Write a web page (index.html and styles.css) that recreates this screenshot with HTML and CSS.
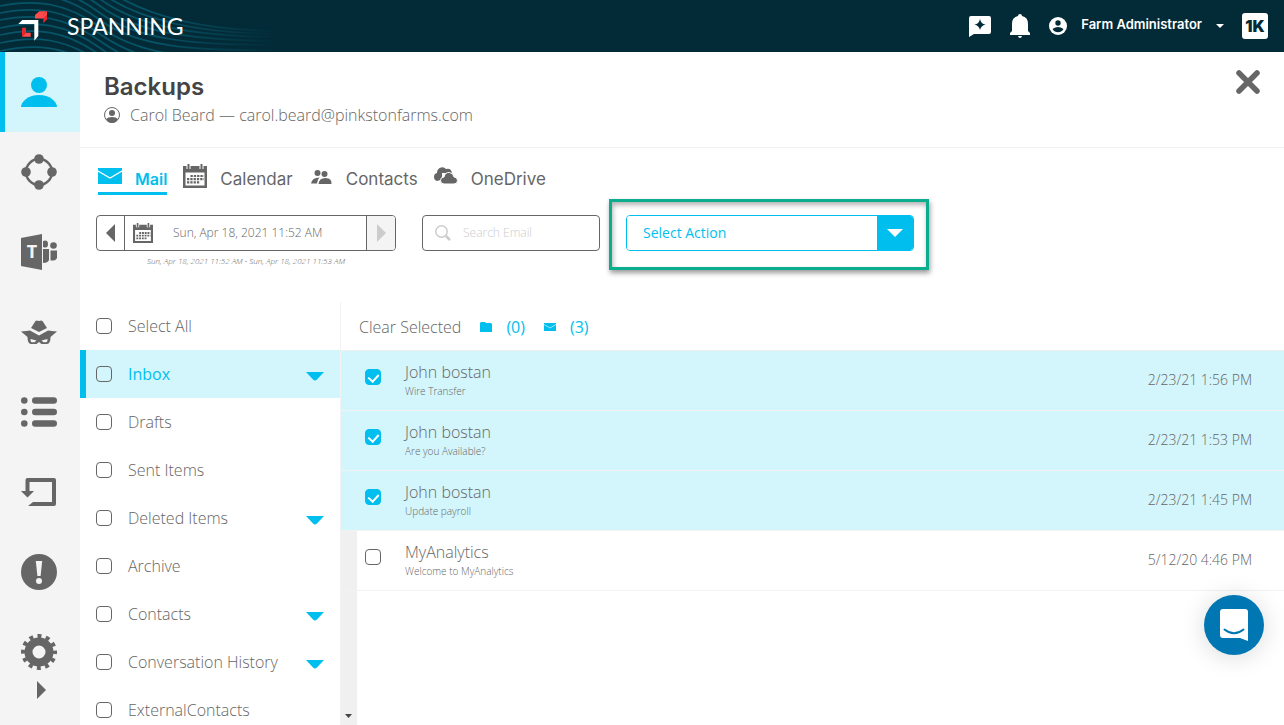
FILE: index.html
```html
<!DOCTYPE html>
<html lang="en">

<head>
    <meta charset="utf-8">
    <meta content="width=device-width, initial-scale=1" name="viewport">
    <title>Spanning Backups</title>
    <link rel="stylesheet" href="styles.css">
</head>

<body>
    <!-- shared icons -->
    <svg class="sprite" aria-hidden="true">
        <symbol id="icon-mail" viewBox="0 0 24 16">
            <path d="M0 0h24v16H0z" />
            <path d="M0 3l12 7 12-7" fill="none" stroke="#fff" stroke-width="1.2" />
        </symbol>
        <symbol id="icon-calendar" viewBox="0 0 24 24">
            <path d="M0 2h24v22H0zM2.500 8.500v13h19v-13z" fill-rule="evenodd" />
            <path d="M5.500 0v5M18.500 0v5" stroke="#fff" stroke-width="4" />
            <path d="M5.500 0v5M18.500 0v5" stroke="currentColor" stroke-width="2" />
            <path d="M7.500 12H21M4 15.200H21M4 18.400H17" stroke="currentColor" stroke-width="2.200" stroke-dasharray="2.300 1" />
        </symbol>
        <symbol id="icon-down" viewBox="0 0 18 9">
            <path d="M0 0h18l-7 7.500q-2 2-4 0z" />
        </symbol>
    </svg>

    <header id="topBar">
        <svg class="waves" viewBox="0 0 290 52" aria-hidden="true">
            <defs>
                <linearGradient id="waveFade" gradientUnits="userSpaceOnUse" x1="0" y1="0" x2="275" y2="0">
                    <stop offset="0" stop-color="#075468" />
                    <stop offset="0.550" stop-color="#075468" />
                    <stop offset="1" stop-color="#022b37" />
                </linearGradient>
            </defs>
            <g fill="none" stroke="url(#waveFade)" stroke-width="1.700">
                <path d="M0-37C35-45 65-41 100-15S190 30 275 31" />
                <path d="M0-30C35-38 65-34 100-8S190 33 275 34" />
                <path d="M0-23C35-31 65-27 100-1S190 36 275 37" />
                <path d="M0-16C35-24 65-20 100 6S190 40 275 41" />
                <path d="M0-9C35-17 65-13 100 13S190 45 275 45" />
                <path d="M0-2C35-10 65-6 100 20S190 51 275 50" />
                <path d="M0 6C35-1 65 2 100 27S180 60 275 60" />
                <path d="M0 13C35 6 65 9 100 34S180 70 275 70" />
                <path d="M0 20C35 13 65 16 100 41S180 80 275 80" />
                <path d="M0 28C35 20 65 23 100 48S180 90 275 90" />
                <path d="M0 35C35 27 65 30 100 55" />
                <path d="M0 43C35 35 65 38 100 62" />
                <path d="M0 51C35 43 65 46 100 69" />
            </g>
        </svg>
        <a class="brand" href="#">
            <svg width="30" height="30" viewBox="0 0 30 30" aria-hidden="true">
                <path d="M17 4L21.300.3H29L25.300 4z" fill="#ff4b4b" />
                <path d="M25.300 4L29 .3v8l-3.700 4z" fill="#e8262b" />
                <path d="M17 4h8.300L29 .3v3.500L25 7.500H17z" fill="#ff4b4b" />
                <path d="M.3 13l4-4h16v16l-4 4.700V13z" fill="#fff" />
                <path d="M4 16.700h4v5l-4 4z" fill="#e8262b" />
                <path d="M8 21.700h4.700v4H4z" fill="#ff4b4b" />
            </svg>
            <span>SPANNING</span>
        </a>
        <nav class="account">
            <button type="button" aria-label="What's new">
                <svg width="22" height="22" viewBox="0 0 22 22">
                    <path d="M2 1h18q2 0 2 2v14q0 2-2 2H5l-5 3V3q0-2 2-2z" fill="#fff" />
                    <path d="M11 4q1 5 5.500 5.500Q12 10.500 11 15 10 10.500 5.500 9.500 10 9 11 4z" fill="#022b37" />
                </svg>
            </button>
            <button type="button" aria-label="Notifications">
                <svg width="22" height="24" viewBox="0 0 22 24">
                    <path d="M9 2a2 2 0 0 1 4 0q6 1 6 8v7l2 2v2H1v-2l2-2v-7q0-7 6-8zM9 22h4q-.5 2-2 2t-2-2z" fill="#fff" />
                </svg>
            </button>
            <button type="button" class="admin">
                <svg width="18" height="18" viewBox="0 0 18 18" aria-hidden="true">
                    <circle cx="9" cy="9" r="9" fill="#fff" />
                    <circle cx="9" cy="6" r="2.700" fill="#022b37" />
                    <path d="M3.500 12q5.500-4 11 0-2 3.300-5.500 3.300T3.500 12z" fill="#022b37" />
                </svg>
                <span>Farm Administrator</span>
                <svg width="8" height="4" viewBox="0 0 8 4" aria-hidden="true">
                    <path d="M0 0h8L4 4z" fill="#fff" />
                </svg>
            </button>
            <a class="oneLogo" href="#" aria-label="Kaseya One">1K</a>
        </nav>
    </header>

    <div id="page">
        <nav id="sideBar">
            <a class="active" href="#" aria-label="Users">
                <svg width="36" height="36" viewBox="0 0 36 36">
                    <circle cx="18" cy="11" r="8" />
                    <path d="M0 33q0-4 5-8 5-4 13-4t13 4q5 4 5 8z" />
                </svg>
            </a>
            <a href="#" aria-label="Sites">
                <svg width="36" height="36" viewBox="0 0 36 36">
                    <circle cx="18" cy="18" r="13" fill="none" stroke="currentColor" stroke-width="2.500" />
                    <circle cx="18" cy="5" r="4.800" />
                    <circle cx="18" cy="31" r="4.800" />
                    <circle cx="5" cy="18" r="4.800" />
                    <circle cx="31" cy="18" r="4.800" />
                </svg>
            </a>
            <a href="#" aria-label="Teams">
                <svg width="36" height="36" viewBox="0 0 36 36">
                    <path d="M0 4l21-4v36L0 32z" />
                    <text class="teamsLetter" x="11" y="24" text-anchor="middle">T</text>
                    <path d="M22 7q5-2 5 3t-5 3zM22 15h6v11q-1 3-6 3z" />
                    <circle cx="32.500" cy="11.500" r="3.300" />
                    <path d="M29.500 16.500H36V24q-1 3-6.500 2.500z" />
                </svg>
            </a>
            <a href="#" aria-label="Threats">
                <svg width="36" height="36" viewBox="0 0 36 36">
                    <path d="M10 14l4.500-7q1-1.200 3.500 0 2.500-1.200 3.500 0l4.500 7-8 4z" />
                    <path d="M0 17.500q6-.5 9-1l9 5 9-5q3 .5 9 1l-6.500 5.500q0 7-3.500 7h-5.500L18 28l-2.500 2H10q-3.500 0-3.500-7z" />
                    <path d="M9.500 25l6 1.500-2 1.800H11q-1.500 0-1.500-3.300zM26.500 25l-6 1.500 2 1.800H25q1.500 0 1.500-3.300z" fill="#f4f4f4" />
                </svg>
            </a>
            <a href="#" aria-label="Activity">
                <svg width="36" height="36" viewBox="0 0 36 36">
                    <circle cx="3.300" cy="6.500" r="3.300" />
                    <circle cx="3.300" cy="18" r="3.300" />
                    <circle cx="3.300" cy="29.500" r="3.300" />
                    <path d="M14.300 6.500h18.400M14.300 18h18.400M14.300 29.500h18.400" stroke="currentColor" stroke-width="6.600" stroke-linecap="round" />
                </svg>
            </a>
            <a href="#" aria-label="Restores">
                <svg width="36" height="36" viewBox="0 0 36 36">
                    <path d="M4.500 6q0-2 2-2H33q2 0 2 2v24q0 2-2 2H7l5-4h19V8H8.500v9H13l-6.500 6.500L0 17h4.500z" />
                </svg>
            </a>
            <a href="#" aria-label="Alerts">
                <svg width="36" height="36" viewBox="0 0 36 36">
                    <circle cx="18" cy="18" r="18" />
                    <path d="M14.800 7h6.400l-1.600 15h-3.200z" fill="#f4f4f4" />
                    <circle cx="18" cy="27" r="3" fill="#f4f4f4" />
                </svg>
            </a>
            <a href="#" aria-label="Settings">
                <svg width="36" height="36" viewBox="0 0 36 36">
                    <circle cx="18" cy="18" r="10.500" fill="none" stroke="currentColor" stroke-width="8" />
                    <circle cx="18" cy="18" r="16" fill="none" stroke="currentColor" stroke-width="4" stroke-dasharray="4 4.378" stroke-dashoffset="2" />
                </svg>
            </a>
            <button type="button" class="expand" aria-label="Expand menu">
                <svg width="9" height="18" viewBox="0 0 9 18">
                    <path d="M0 0l9 9-9 9z" />
                </svg>
            </button>
        </nav>

        <main>
            <section class="pageHead">
                <div>
                    <h1>Backups</h1>
                    <p class="owner">
                        <svg width="16" height="16" viewBox="0 0 16 16" aria-hidden="true">
                            <circle cx="8" cy="8" r="7.500" fill="none" stroke="currentColor" />
                            <circle cx="8" cy="6" r="3" />
                            <path d="M2 12q2-2 6-2t6 2q-2 4-6 4t-6-4z" />
                        </svg>
                        Carol Beard — carol.beard@pinkstonfarms.com
                    </p>
                </div>
                <button type="button" class="close" aria-label="Close">
                    <svg width="24" height="24" viewBox="0 0 24 24">
                        <path d="M3 3l18 18M21 3L3 21" stroke="currentColor" stroke-width="5.500" stroke-linecap="round" />
                    </svg>
                </button>
            </section>

            <nav class="tabs">
                <a class="active" href="#"><svg width="24" height="16"><use href="#icon-mail" /></svg>Mail</a>
                <a href="#"><svg width="24" height="24"><use href="#icon-calendar" /></svg>Calendar</a>
                <a href="#">
                    <svg width="24" height="16" viewBox="0 -1 24 16">
                        <circle cx="8.500" cy="4" r="3" />
                        <circle cx="15.500" cy="5" r="3" />
                        <path d="M2 14.500q1-6 8.500-6-2 2-2.500 6zM9.500 15q.5-6 7-6t6 6z" />
                    </svg>Contacts</a>
                <a href="#">
                    <svg width="24" height="18" viewBox="0 0 24 18">
                        <path d="M3 14q-3-1-3-4 0-3.500 3-4 0-4.500 4-5.500 3-.8 5 1.500 5-1.500 6 4H8v6.500z" />
                        <path d="M10 17q-3.500 0-3.500-3.500t3.500-3.500q1-5 5.500-4.500 4 .5 4.500 4.500 3.500 0 3.500 3.500T20 17z" stroke="#fff" />
                    </svg>OneDrive</a>
            </nav>

            <section class="toolBar">
                <div class="dateGroup">
                    <div class="datePicker">
                        <button type="button" class="prev" aria-label="Previous backup">
                            <svg width="9" height="18" viewBox="0 0 9 18"><path d="M9 0v18L0 9z" /></svg>
                        </button>
                        <button type="button" class="date">
                            <svg width="20" height="20" aria-hidden="true"><use href="#icon-calendar" /></svg>
                            <span>Sun, Apr 18, 2021 11:52 AM</span>
                        </button>
                        <button type="button" class="next" aria-label="Next backup" disabled>
                            <svg width="9" height="18" viewBox="0 0 9 18"><path d="M0 0l9 9-9 9z" /></svg>
                        </button>
                    </div>
                    <p class="range">Sun, Apr 18, 2021 11:52 AM - Sun, Apr 18, 2021 11:53 AM</p>
                </div>

                <label class="search">
                    <svg width="16" height="16" viewBox="0 0 16 16" aria-hidden="true">
                        <circle cx="6.500" cy="6.500" r="5.700" fill="none" stroke="currentColor" stroke-width="1.500" />
                        <path d="M11 11l4 4" stroke="currentColor" stroke-width="2.500" />
                    </svg>
                    <input type="text" placeholder="Search Email" aria-label="Search Email">
                </label>

                <div class="highlight">
                    <label class="action">
                        <select aria-label="Select Action">
                            <option>Select Action</option>
                        </select>
                        <span class="actionArrow">
                            <svg width="16" height="8" viewBox="0 0 16 8" aria-hidden="true"><path d="M0 0h16L8 8z" /></svg>
                        </span>
                    </label>
                </div>
            </section>

            <section class="content">
                <ul class="folders">
                    <li><label><input type="checkbox">Select All</label></li>
                    <li class="active"><label><input type="checkbox">Inbox</label>
                        <button type="button" aria-label="Expand Inbox"><svg width="18" height="9"><use href="#icon-down" /></svg></button></li>
                    <li><label><input type="checkbox">Drafts</label></li>
                    <li><label><input type="checkbox">Sent Items</label></li>
                    <li><label><input type="checkbox">Deleted Items</label>
                        <button type="button" aria-label="Expand Deleted Items"><svg width="18" height="9"><use href="#icon-down" /></svg></button></li>
                    <li><label><input type="checkbox">Archive</label></li>
                    <li><label><input type="checkbox">Contacts</label>
                        <button type="button" aria-label="Expand Contacts"><svg width="18" height="9"><use href="#icon-down" /></svg></button></li>
                    <li><label><input type="checkbox">Conversation History</label>
                        <button type="button" aria-label="Expand Conversation History"><svg width="18" height="9"><use href="#icon-down" /></svg></button></li>
                    <li><label><input type="checkbox">ExternalContacts</label></li>
                </ul>

                <div class="messages">
                    <div class="selection">
                        <button type="button">Clear Selected</button>
                        <span class="count">
                            <svg width="12" height="10" viewBox="0 0 12 10" aria-hidden="true"><path d="M1 0h4l1 1h5l1 1v8H0V1z" /></svg>
                            (0)
                        </span>
                        <span class="count">
                            <svg width="12" height="8" aria-hidden="true"><use href="#icon-mail" /></svg>
                            (3)
                        </span>
                    </div>
                    <div class="messageList">
                        <label class="message selected">
                            <input type="checkbox" checked>
                            <span class="subject"><b>John bostan</b><small>Wire Transfer</small></span>
                            <time>2/23/21 1:56 PM</time>
                        </label>
                        <label class="message selected">
                            <input type="checkbox" checked>
                            <span class="subject"><b>John bostan</b><small>Are you Available?</small></span>
                            <time>2/23/21 1:53 PM</time>
                        </label>
                        <label class="message selected">
                            <input type="checkbox" checked>
                            <span class="subject"><b>John bostan</b><small>Update payroll</small></span>
                            <time>2/23/21 1:45 PM</time>
                        </label>
                        <label class="message">
                            <input type="checkbox">
                            <span class="subject"><b>MyAnalytics</b><small>Welcome to MyAnalytics</small></span>
                            <time>5/12/20 4:46 PM</time>
                        </label>
                        <svg class="scrollDown" width="7" height="4" viewBox="0 0 7 4" aria-hidden="true"><path d="M0 0h7L3.500 4z" /></svg>
                    </div>
                </div>
            </section>
        </main>
    </div>

    <button type="button" id="chat" aria-label="Open chat">
        <svg width="28" height="32" viewBox="0 0 28 32">
            <path d="M3 0h22q3 0 3 3v29l-8-3H3q-3 0-3-3V3q0-3 3-3z" fill="#fff" />
            <path d="M4.500 20.500q9.500 7.500 19 0" fill="none" stroke="#0077b3" stroke-width="2" stroke-linecap="round" />
        </svg>
    </button>
</body>

</html>
```
FILE: styles.css
```css
* {
    box-sizing: border-box;
}

html,
body {
    height: 100%;
    margin: 0;
}

body {
    display: flex;
    flex-direction: column;
    overflow: hidden;
    background-color: white;
    color: #666;
    font-family: "Open Sans", sans-serif;
    font-size: 16px;
    font-weight: 300;
}

button,
input,
select {
    font: inherit;
    color: inherit;
}

button {
    padding: 0;
    border: none;
    background: none;
    cursor: pointer;
}

a {
    color: inherit;
    text-decoration: none;
}

svg {
    display: block;
    flex: none;
    fill: currentColor;
}

.sprite {
    position: absolute;
    width: 0;
    height: 0;
}

input[type="checkbox"] {
    appearance: none;
    flex: none;
    display: flex;
    justify-content: center;
    width: 16px;
    height: 16px;
    margin: 0;
    border: 1px solid #666;
    border-radius: 4px;
}

input[type="checkbox"]:checked {
    border-color: #00bfee;
    background-color: #00bfee;
}

/* the tick */
input[type="checkbox"]:checked::after {
    content: "";
    width: 5px;
    height: 8px;
    margin-top: 2px;
    border: solid white;
    border-width: 0 2px 2px 0;
    transform: rotate(42deg);
}

/* top bar */
#topBar {
    position: relative;
    display: flex;
    flex: none;
    justify-content: space-between;
    align-items: center;
    height: 52px;
    padding: 0 16px 0 18px;
    background-color: #022b37;
    color: white;
}

.waves {
    position: absolute;
    top: 0;
    left: 0;
    width: 290px;
    height: 52px;
}

.brand {
    position: relative;
    display: flex;
    align-items: center;
    gap: 19px;
    font-family: "Lato", sans-serif;
    font-size: 23px;
    font-weight: 400;
}

.account {
    display: flex;
    align-items: center;
    gap: 18px;
}

.admin {
    display: flex;
    align-items: center;
    gap: 14px;
    font-family: "Inter", sans-serif;
    font-size: 13px;
    font-weight: 600;
    line-height: 20px;
}

.admin span {
    padding-bottom: 4px;
}

.oneLogo {
    width: 26px;
    border-radius: 3px;
    background-color: white;
    color: #022b37;
    font-family: "Inter", sans-serif;
    font-size: 16px;
    font-weight: 900;
    line-height: 26px;
    text-align: center;
}

/* left menu */
#page {
    display: flex;
    flex: 1;
    min-height: 0;
}

#sideBar {
    display: flex;
    flex: none;
    flex-direction: column;
    width: 80px;
    background-color: #f4f4f4;
}

#sideBar a {
    display: flex;
    flex: none;
    align-items: center;
    justify-content: center;
    height: 80px;
    padding-right: 2px;
}

#sideBar a.active {
    padding-right: 7px;
    border-left: 5px solid #00bfee;
    background-color: #d3f5fc;
    color: #00bfee;
}

.teamsLetter {
    fill: #f4f4f4;
    font-family: "Open Sans", sans-serif;
    font-size: 18px;
    font-weight: 700;
}

.expand {
    align-self: center;
    margin-top: -11px;
    padding-left: 2px;
}

/* page title */
main {
    display: flex;
    flex: 1;
    flex-direction: column;
    min-width: 0;
}

.pageHead {
    display: flex;
    justify-content: space-between;
    align-items: flex-start;
    height: 96px;
    padding: 18px 24px 0;
    border-bottom: 1px solid #f0f0f0;
}

h1 {
    margin: 0;
    color: #444;
    font-family: "Inter", sans-serif;
    font-size: 24px;
    font-weight: 600;
    line-height: 34px;
}

.owner {
    display: flex;
    align-items: center;
    gap: 10px;
    margin: 0;
    line-height: 22px;
}

/* tabs */
.tabs {
    display: flex;
    align-items: flex-start;
    gap: 16px;
    padding: 17px 18px 0;
    font-family: "Inter", sans-serif;
    font-size: 17px;
    font-weight: 400;
}

.tabs a {
    display: flex;
    align-items: center;
    gap: 13px;
    height: 30px;
    border-bottom: 3px solid transparent;
}

.tabs svg {
    margin-bottom: 6px;
}

.tabs a.active {
    border-color: #00bfee;
    color: #00bfee;
    font-size: 16px;
    font-weight: 600;
}

/* date, search and action */
.toolBar {
    display: flex;
    align-items: flex-start;
    height: 107px;
    padding: 4px 16px 0;
}

.dateGroup {
    width: 300px;
    margin: 16px 26px 0 0;
}

.datePicker {
    display: flex;
    height: 36px;
    border: 1px solid #666;
    border-radius: 4px;
    overflow: hidden;
}

.datePicker button {
    display: flex;
    align-items: center;
}

.prev,
.next {
    justify-content: center;
    width: 28px;
}

.datePicker .prev {
    width: 27px;
}

.datePicker .date {
    flex: 1;
    gap: 20px;
    padding-left: 8px;
    border: solid #666;
    border-width: 0 1px;
    font-size: 12px;
}

.date span,
.search input,
.action select {
    padding-bottom: 2px;
}

.next {
    background-color: #f4f4f4;
    color: #ccc;
}

.range {
    margin: 4px 0 0;
    font-size: 8px;
    font-style: italic;
    line-height: 12px;
    text-align: center;
}

.search {
    display: flex;
    align-items: center;
    gap: 12px;
    width: 178px;
    height: 36px;
    margin-top: 16px;
    padding: 0 12px;
    border: 1px solid #666;
    border-radius: 4px;
    color: #ccc;
}

.search input {
    width: 100%;
    min-width: 0;
    padding: 0 0 2px;
    border: none;
    outline: none;
    font-size: 12px;
}

.search input::placeholder {
    color: #ccc;
}

.highlight {
    width: 320px;
    margin-left: 9px;
    padding: 13px 12px 16px 14px;
    border: 3px solid #0aae8e;
    box-shadow: 1px 3px 5px rgba(0, 0, 0, 0.4), inset 1px 3px 5px rgba(0, 0, 0, 0.3);
}

.action {
    display: flex;
    height: 36px;
    border: 1px solid #00bfee;
    border-radius: 4px;
    overflow: hidden;
    color: #00bfee;
}

.action select {
    appearance: none;
    flex: 1;
    padding: 0 16px 2px;
    border: none;
    background: white;
    font-size: 14px;
    font-weight: 500;
}

.actionArrow {
    display: flex;
    align-items: center;
    justify-content: center;
    width: 36px;
    background-color: #00bfee;
    color: white;
}

/* folders */
.content {
    display: flex;
    flex: 1;
    min-height: 0;
}

.folders {
    flex: none;
    width: 261px;
    margin: 0;
    padding: 0;
    border-right: 1px solid #f2f2f2;
    overflow: hidden;
    list-style: none;
}

.folders li {
    display: flex;
    align-items: center;
    justify-content: space-between;
    height: 48px;
    padding: 0 16px;
}

.folders label {
    display: flex;
    align-items: center;
    gap: 16px;
}

.folders button {
    padding-top: 4px;
}

.folders svg {
    color: #00bfee;
}

.folders li.active {
    padding-left: 10px;
    border-left: 6px solid #00bfee;
    background-color: #d3f5fc;
}

.folders li.active label {
    color: #00bfee;
    font-weight: 400;
}

/* messages */
.messages {
    display: flex;
    flex: 1;
    flex-direction: column;
    min-width: 0;
}

.selection {
    display: flex;
    align-items: center;
    gap: 19px;
    height: 48px;
    padding: 2px 18px 0;
}

.selection button {
    font-weight: 300;
}

.count {
    display: flex;
    align-items: center;
    gap: 14px;
    color: #00bfee;
    font-weight: 400;
}

/* grey strip on the left is the folder scroll track */
.messageList {
    display: flex;
    flex: 1;
    flex-direction: column;
    border-top: 1px solid #f0f0f0;
    background: linear-gradient(#f0f0f0, #f0f0f0) left / 16px 100% no-repeat;
}

.message {
    display: flex;
    align-items: center;
    height: 60px;
    padding: 0 32px 2px 24px;
    border-bottom: 1px solid #f2f2f2;
}

.message.selected {
    background-color: #d3f5fc;
}

.message input[type="checkbox"] {
    margin: 0 24px 6px 0;
}

.subject {
    display: flex;
    flex: 1;
    flex-direction: column;
}

.subject b {
    font-weight: 300;
    line-height: 22px;
}

.subject small {
    font-size: 10px;
    line-height: 16px;
}

.message time {
    font-size: 14px;
}

.scrollDown {
    margin: auto 0 7px 4px;
    color: #444;
}

#chat {
    position: fixed;
    right: 20px;
    bottom: 70px;
    display: flex;
    align-items: center;
    justify-content: center;
    width: 60px;
    height: 60px;
    border-radius: 50%;
    background-color: #0077b3;
    box-shadow: 0 2px 24px rgba(0, 0, 0, 0.15);
}
```
